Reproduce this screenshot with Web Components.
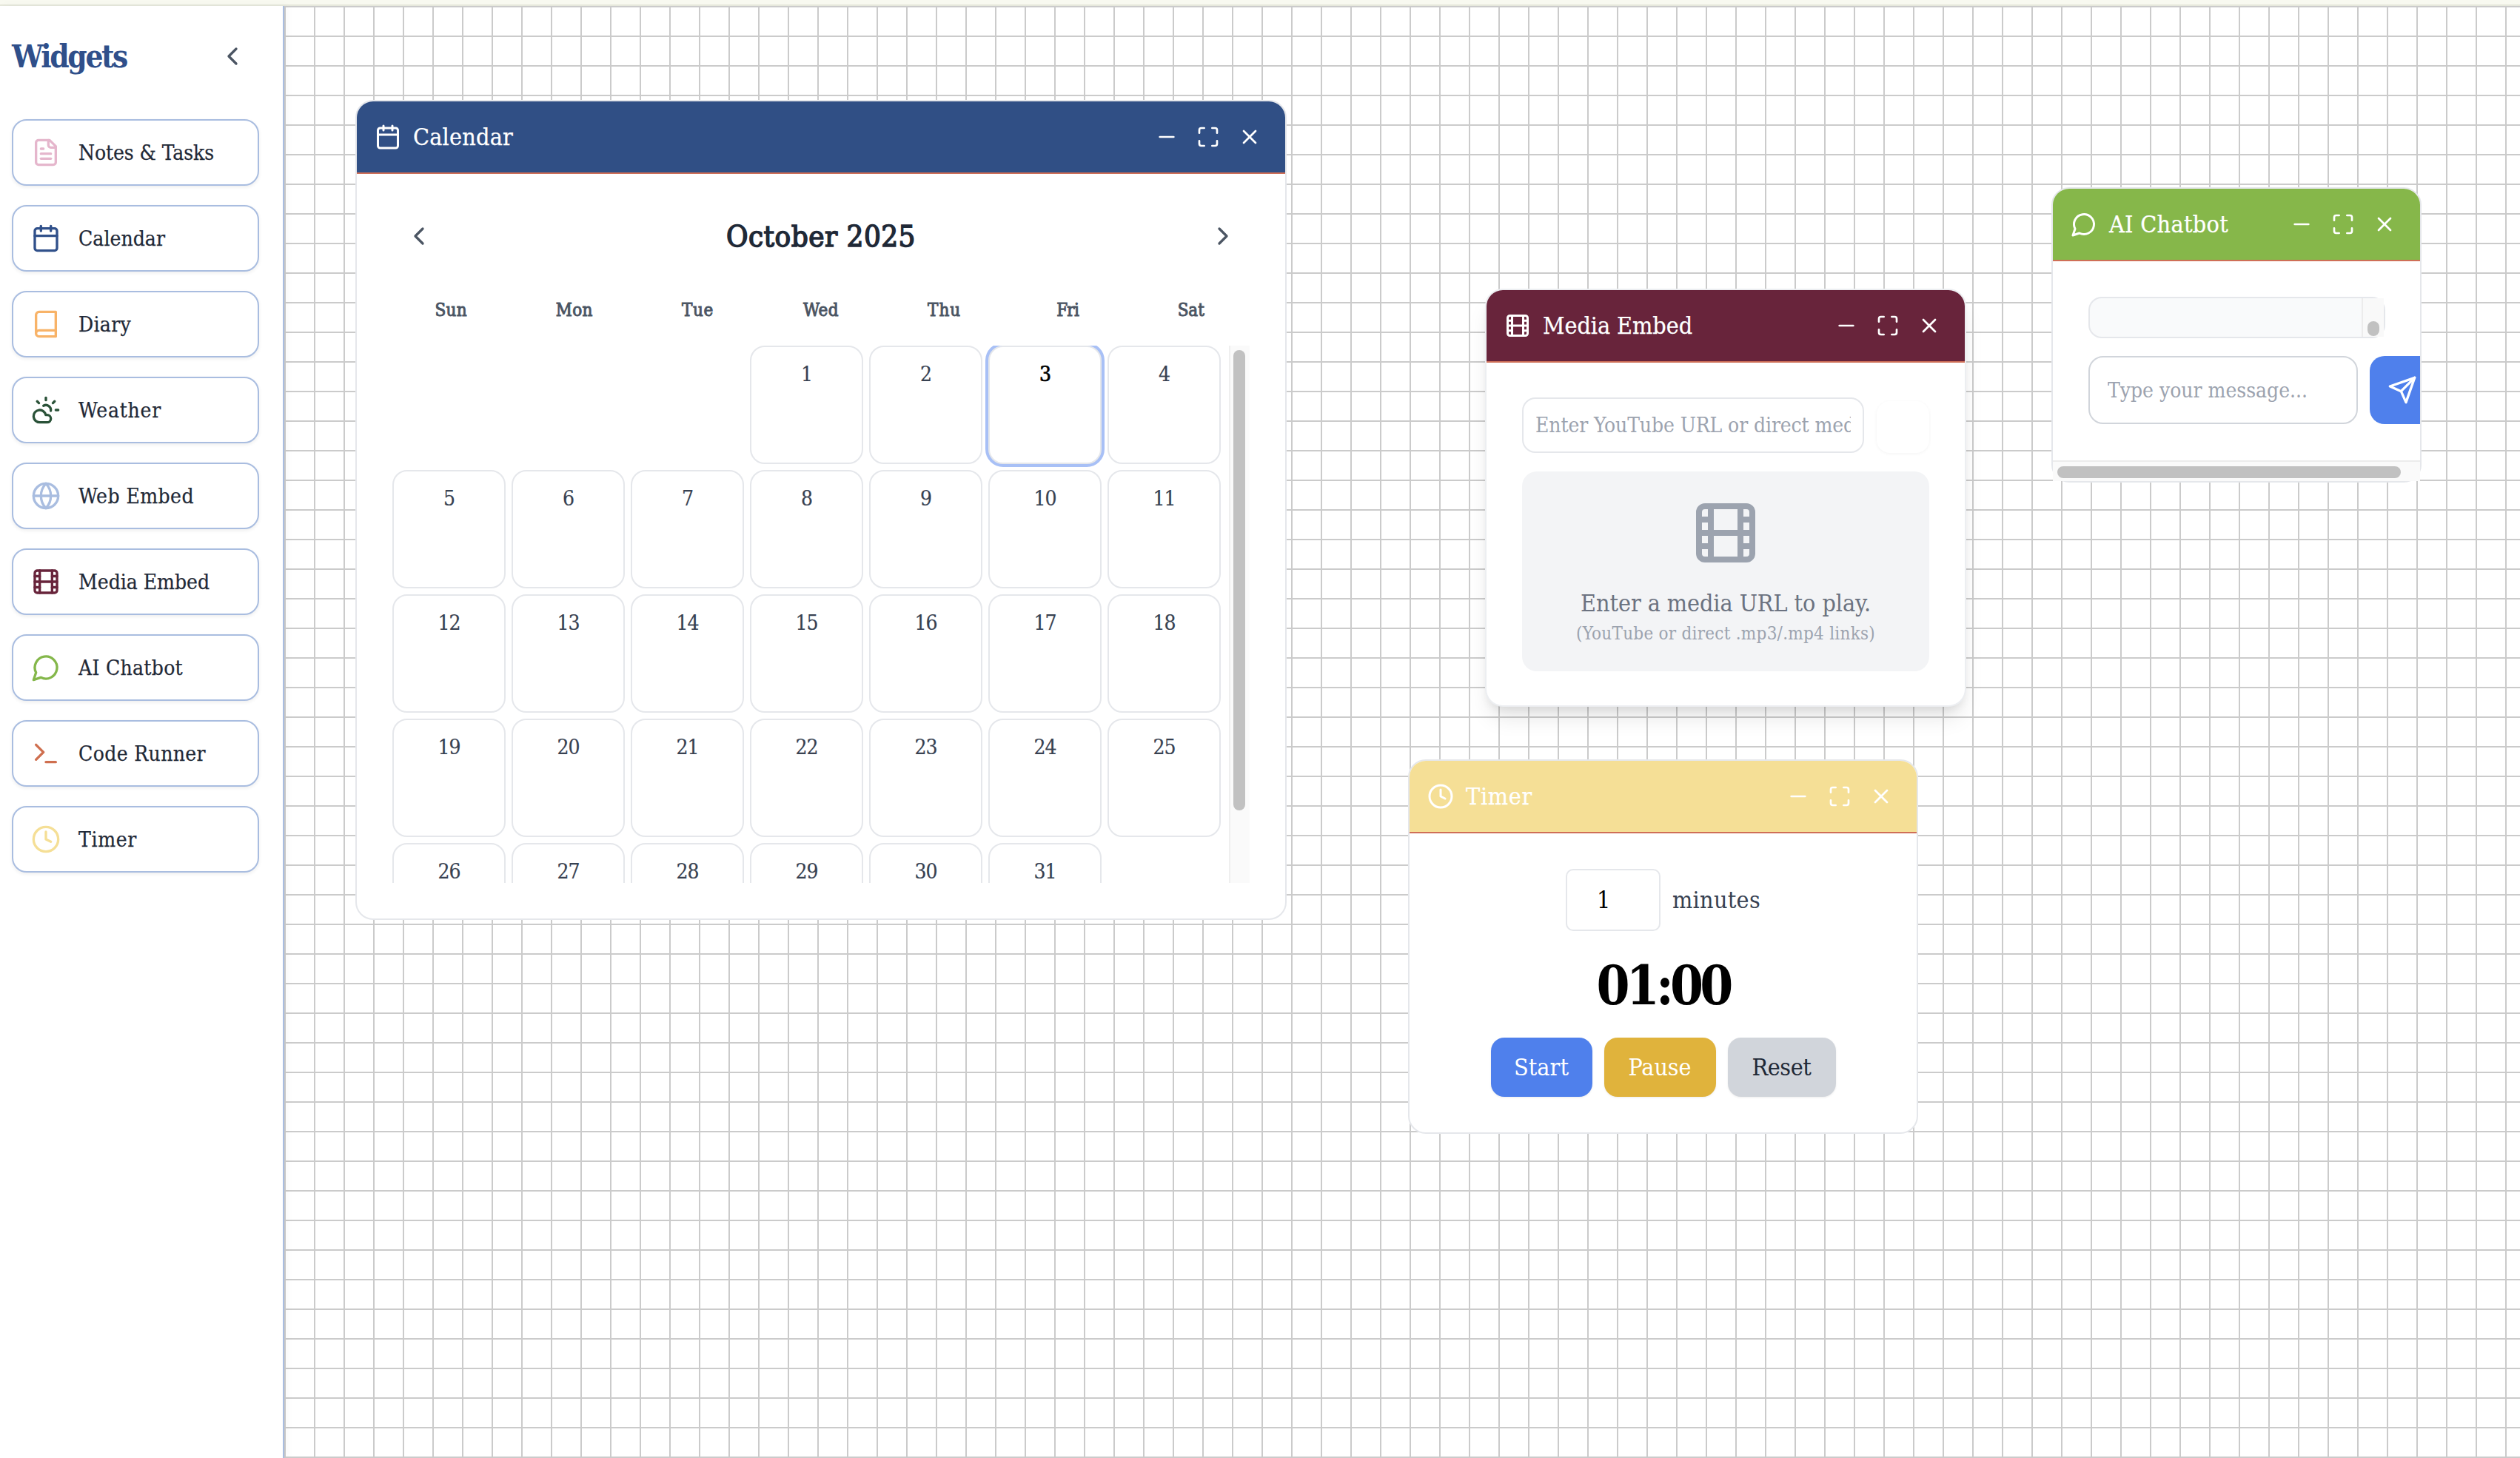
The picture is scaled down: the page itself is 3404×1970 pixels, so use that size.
<!doctype html>
<html lang="en"><head><meta charset="utf-8"><title>Widgets</title>
<style>
html,body{margin:0;height:100%;overflow:hidden;background:#fff;font-family:"DejaVu Serif Condensed","Liberation Serif",serif;color:#1f2937}
</style></head><body>
<app-shell>
  <side-bar slot="side">
    <side-item icon="file" color="#e5b6cc"><x-t w="183">Notes &amp; Tasks</x-t></side-item>
    <side-item icon="calendar" color="#30508a"><x-t w="117">Calendar</x-t></side-item>
    <side-item icon="book" color="#f8b368"><x-t w="71">Diary</x-t></side-item>
    <side-item icon="cloud" color="#2a5238"><x-t w="112">Weather</x-t></side-item>
    <side-item icon="globe" color="#a9bde0"><x-t w="156">Web Embed</x-t></side-item>
    <side-item icon="film" color="#68243b"><x-t w="177">Media Embed</x-t></side-item>
    <side-item icon="chat" color="#84b74a"><x-t w="141">AI Chatbot</x-t></side-item>
    <side-item icon="term" color="#cf6f4f"><x-t w="172">Code Runner</x-t></side-item>
    <side-item icon="clock" color="#f5df96"><x-t w="79">Timer</x-t></side-item>
  </side-bar>
  <grid-canvas slot="canvas">
    <app-window x="96" y="127" w="1258" h="1108" color="#304f85" icon="calendar" label="Calendar" fit="135"><calendar-widget></calendar-widget></app-window>
    <app-window x="1622" y="382" w="650" h="565" color="#68243b" icon="film" label="Media Embed" fit="202" raised><media-widget></media-widget></app-window>
    <app-window x="2387" y="245" w="500" h="399" color="#86b74a" icon="chat" label="AI Chatbot" fit="161"><chat-widget></chat-widget></app-window>
    <app-window x="1518" y="1018" w="689" h="506" color="#f5df96" icon="clock" label="Timer" fit="90"><timer-widget></timer-widget></app-window>
  </grid-canvas>
</app-shell>
<script>
const FAM='"DejaVu Serif Condensed","Liberation Serif",serif';
const ICONS={
 file:'<path d="M15 2H6a2 2 0 0 0-2 2v16a2 2 0 0 0 2 2h12a2 2 0 0 0 2-2V7Z"/><path d="M14 2v4a2 2 0 0 0 2 2h4"/><path d="M10 9H8"/><path d="M16 13H8"/><path d="M16 17H8"/>',
 calendar:'<path d="M8 2v4"/><path d="M16 2v4"/><rect x="3" y="4" width="18" height="18" rx="2"/><path d="M3 10h18"/>',
 book:'<path d="M4 19.5v-15A2.5 2.5 0 0 1 6.5 2H20v20H6.5a2.5 2.5 0 0 1 0-5H20"/>',
 cloud:'<path d="M12 2v2"/><path d="m4.93 4.93 1.41 1.41"/><path d="M20 12h2"/><path d="m19.07 4.93-1.41 1.41"/><path d="M15.947 12.65a4 4 0 0 0-5.925-4.128"/><path d="M13 22H7a5 5 0 1 1 4.9-6H13a3 3 0 0 1 0 6Z"/>',
 globe:'<circle cx="12" cy="12" r="10"/><path d="M12 2a14.5 14.5 0 0 0 0 20 14.5 14.5 0 0 0 0-20"/><path d="M2 12h20"/>',
 film:'<rect x="3" y="3" width="18" height="18" rx="2"/><path d="M7 3v18"/><path d="M3 7.5h4"/><path d="M3 12h18"/><path d="M3 16.5h4"/><path d="M17 3v18"/><path d="M17 7.5h4"/><path d="M17 16.5h4"/>',
 chat:'<path d="M7.9 20A9 9 0 1 0 4 16.1L2 22Z"/>',
 term:'<polyline points="4 17 10 11 4 5"/><line x1="12" x2="20" y1="19" y2="19"/>',
 clock:'<circle cx="12" cy="12" r="10"/><polyline points="12 6 12 12 16 14"/>',
 send:'<path d="m22 2-7 20-4-9-9-4Z"/><path d="M22 2 11 13"/>',
 left:'<path d="m15 18-6-6 6-6"/>',
 right:'<path d="m9 18 6-6-6-6"/>',
 minus:'<path d="M5 12h14"/>',
 max:'<path d="M8 3H5a2 2 0 0 0-2 2v3"/><path d="M21 8V5a2 2 0 0 0-2-2h-3"/><path d="M3 16v3a2 2 0 0 0 2 2h3"/><path d="M16 21h3a2 2 0 0 0 2-2v-3"/>',
 x:'<path d="M18 6 6 18"/><path d="m6 6 12 12"/>'
};
const measureCtx=document.createElement('canvas').getContext('2d');
function fitSpacing(text,font,w){measureCtx.font=font;return (w-measureCtx.measureText(text).width)/text.length;}

class LIcon extends HTMLElement{
  connectedCallback(){
    if(this.shadowRoot)return;
    const s=this.getAttribute('size')||40,c=this.getAttribute('color')||'currentColor';
    this.attachShadow({mode:'open'}).innerHTML=`<style>:host{display:block;flex:none;width:${s}px;height:${s}px;line-height:0}</style>
    <svg xmlns="http://www.w3.org/2000/svg" width="${s}" height="${s}" viewBox="0 0 24 24" fill="none" stroke="${c}" stroke-width="2" stroke-linecap="round" stroke-linejoin="round">${ICONS[this.getAttribute('name')]}</svg>`;
  }
}
class AppShell extends HTMLElement{
  constructor(){super();this.attachShadow({mode:'open'}).innerHTML=`<style>
  :host{display:flex;flex-direction:column;height:100vh}
  .strip{height:6px;background:#f8f9f0;border-bottom:2px solid #e6e8dc;flex:none}
  .main{flex:1;display:flex;min-height:0}
  </style><div class="strip"></div><div class="main"><slot name="side"></slot><slot name="canvas"></slot></div>`;}
}
class SideBar extends HTMLElement{
  constructor(){super();this.attachShadow({mode:'open'}).innerHTML=`<style>
  :host{display:block;box-sizing:border-box;width:384px;flex:none;background:#fff;border-right:2px solid #a9bde0;padding:32px 32px 0 16px;position:relative;z-index:2;box-shadow:4px 0 10px rgba(0,0,0,.035)}
  .head{display:flex;align-items:center;justify-content:space-between;height:72px;margin-bottom:49px}
  h2{margin:2px 0 0;font-size:42px;font-weight:700;color:#2f4f8a;line-height:50px}
  .list{display:flex;flex-direction:column;gap:26px}
  button{all:unset;display:block;padding:16px;color:#4b5563;width:40px;height:40px}
  </style><div class="head"><h2><x-t w="155">Widgets</x-t></h2><button><l-icon name="left" size="40"></l-icon></button></div><div class="list"><slot></slot></div>`;}
}
class SideItem extends HTMLElement{
  constructor(){super();this.attachShadow({mode:'open'});}
  connectedCallback(){
    if(this.shadowRoot.firstChild)return;
    this.shadowRoot.innerHTML=`<style>
    :host{display:flex;box-sizing:border-box;height:90px;width:334px;align-items:center;gap:24px;padding:0 24px;border:2px solid #a9bde0;border-radius:20px;background:#fff;box-shadow:0 2px 5px rgba(0,0,0,.07);font-size:28px;color:#1f2937;-webkit-text-stroke:.25px #1f2937}
    </style><l-icon name="${this.getAttribute('icon')}" color="${this.getAttribute('color')}" size="40"></l-icon><slot></slot>`;
  }
}
class GridCanvas extends HTMLElement{
  constructor(){super();this.attachShadow({mode:'open'}).innerHTML=`<style>
  :host{display:block;position:relative;flex:1;min-width:0;overflow:hidden;background-color:#fff;
    background-image:linear-gradient(#cbcbcb 2px,transparent 2px),linear-gradient(90deg,#cbcbcb 2px,transparent 2px);background-size:40px 40px}
  </style><slot></slot>`;}
}
class AppWindow extends HTMLElement{
  constructor(){super();this.attachShadow({mode:'open'});}
  connectedCallback(){
    if(this.shadowRoot.firstChild)return;
    const a=n=>this.getAttribute(n);
    this.shadowRoot.innerHTML=`<style>
    :host{position:absolute;left:${a('x')}px;top:${a('y')}px;width:${a('w')}px;height:${a('h')}px;box-sizing:border-box;display:flex;flex-direction:column;background:#fff;border:2px solid #e5e7eb;border-radius:24px}
    :host([raised]){border-color:#eceef1;box-shadow:0 20px 30px -6px rgba(0,0,0,.1),0 8px 12px -4px rgba(0,0,0,.08)}
    header{flex:none;box-sizing:border-box;height:98px;display:flex;align-items:center;padding:0 24px;background:${a('color')};border-bottom:2px solid #cf6f57;border-radius:22px 22px 0 0;color:#fff}
    .title{flex:1;display:flex;align-items:center;gap:16px;font-size:32px;min-width:0;-webkit-text-stroke:.25px #fff}
    .ctl{display:flex;gap:8px}
    .ctl span{display:block;padding:8px}
    .body{flex:1;min-height:0;display:flex;flex-direction:column}
    ::slotted(*){flex:1;min-height:0}
    </style><header><div class="title"><l-icon name="${a('icon')}" size="36"></l-icon><x-t w="${a('fit')}">${a('label')}</x-t></div>
    <div class="ctl"><span><l-icon name="minus" size="32"></l-icon></span><span><l-icon name="max" size="32"></l-icon></span><span><l-icon name="x" size="32"></l-icon></span></div></header><div class="body"><slot></slot></div>`;
  }
}
class CalendarWidget extends HTMLElement{
  constructor(){super();
    const wk=[['Sun',43.5],['Mon',50],['Tue',43],['Wed',48],['Thu',45],['Fri',30],['Sat',36]];
    let cells='<div></div><div></div><div></div>';
    for(let d=1;d<=31;d++)cells+=`<div class="day${d===3?' today':''}">${d}</div>`;
    this.attachShadow({mode:'open'}).innerHTML=`<style>
    :host{display:flex;flex-direction:column;box-sizing:border-box;padding:48px}
    .nav{flex:none;display:flex;align-items:center;justify-content:space-between;height:72px;margin-bottom:48px}
    .nav span{display:block;padding:16px;color:#4b5563}
    h3{margin:0;font-size:40px;font-weight:400;-webkit-text-stroke:1.5px #1f2937;color:#1f2937;line-height:48px}
    .wk{flex:none;display:grid;grid-template-columns:repeat(7,1fr);gap:8px;height:32px;margin-bottom:32px;text-align:center;font-size:24px;font-weight:400;-webkit-text-stroke:.95px #4b5563;color:#4b5563;line-height:32px}
    .scroll{flex:1;min-height:0;display:flex}
    .clip{flex:1;min-width:0;overflow:hidden;padding-right:11px}
    .grid{display:grid;grid-template-columns:repeat(7,1fr);grid-auto-rows:160px;gap:8px}
    .day{box-sizing:border-box;border:2px solid #e5e7eb;border-radius:20px;padding-top:23px;text-align:center;font-size:28px;line-height:28px;letter-spacing:-1px;color:#374151;-webkit-text-stroke:.2px #374151;background:#fff}
    .today{box-shadow:0 0 0 4px #a8c0f6;color:#000;-webkit-text-stroke:.7px #000}
    .track{flex:none;box-sizing:border-box;width:28px;background:#fafafa;border-left:2px solid #efefef;padding:6px 6px 0 4px}
    .thumb{height:622px;border-radius:8px;background:#c1c1c1}
    </style>
    <div class="nav"><span><l-icon name="left" size="40"></l-icon></span><h3><x-t w="256">October 2025</x-t></h3><span><l-icon name="right" size="40"></l-icon></span></div>
    <div class="wk">${wk.map(([t,w])=>`<div><x-t w="${w}">${t}</x-t></div>`).join('')}</div>
    <div class="scroll"><div class="clip"><div class="grid">${cells}</div></div><div class="track"><div class="thumb"></div></div></div>`;
  }
}
class MediaWidget extends HTMLElement{
  constructor(){super();
    const ls=fitSpacing('Enter YouTube URL or direct me','28px '+FAM,416);
    this.attachShadow({mode:'open'}).innerHTML=`<style>
    :host{display:block;box-sizing:border-box;padding:47px 48px 48px}
    .row{display:flex;gap:17px;align-items:flex-end;height:75px}
    input{box-sizing:border-box;width:462px;height:75px;border:2px solid #e5e7eb;border-radius:18px;padding:0 16px;font:28px ${FAM};letter-spacing:${ls}px;background:#fff;outline:none;color:#1f2937}
    input::placeholder{color:#9ca3af;opacity:1}
    button{all:unset;display:block;width:71px;height:70px;border-radius:18px;background:#fff;box-shadow:0 1px 4px rgba(0,0,0,.05)}
    .ph{margin-top:25px;height:270px;box-sizing:border-box;padding-top:35px;border-radius:20px;background:#f3f4f6;display:flex;flex-direction:column;align-items:center;text-align:center}
    .a{margin-top:25px;font-size:32px;line-height:44px;color:#6b7280}
    .b{margin-top:3px;font-size:24px;line-height:32px;color:#9ca3af}
    </style>
    <div class="row"><input placeholder="Enter YouTube URL or direct media link"><button aria-label="Load"></button></div>
    <div class="ph"><l-icon name="film" size="96" color="#9ca3af"></l-icon><div class="a"><x-t w="392">Enter a media URL to play.</x-t></div><div class="b"><x-t w="404">(YouTube or direct .mp3/.mp4 links)</x-t></div></div>`;
  }
}
class ChatWidget extends HTMLElement{
  constructor(){super();
    const ls=fitSpacing('Type your message...','28px '+FAM,270);
    this.attachShadow({mode:'open'}).innerHTML=`<style>
    :host{display:flex;flex-direction:column;min-height:0}
    .clip{flex:1;min-height:0;overflow:hidden;padding:48px 0 0 48px}
    .msgs{box-sizing:border-box;width:401px;height:56px;background:#f9fafb;border:2px solid #e5e7eb;border-radius:18px;display:flex;justify-content:flex-end}
    .vtrack{box-sizing:border-box;width:30px;height:100%;background:#f9f9f9;border-left:2px solid #ececec;display:flex;align-items:flex-end;justify-content:center;padding-bottom:1px}
    .vthumb{width:16px;height:20px;border-radius:8px;background:#c1c1c1}
    .row{display:flex;gap:16px;margin-top:24px;width:468px}
    input{box-sizing:border-box;width:364px;height:92px;flex:none;border:2px solid #d1d5db;border-radius:20px;padding:0 24px;font:28px ${FAM};letter-spacing:${ls}px;background:#fff;outline:none}
    input::placeholder{color:#9ca3af;opacity:1}
    button{all:unset;flex:none;box-sizing:border-box;width:88px;height:92px;padding:26px 24px;border-radius:20px;background:#4f80ec;color:#fff}
    .htrack{flex:none;box-sizing:border-box;height:28px;background:#fafafa;border-top:2px solid #ececec;padding:6px 6px 0}
    .hthumb{width:464px;height:16px;border-radius:8px;background:#c1c1c1}
    </style><div class="clip"><div class="msgs"><div class="vtrack"><div class="vthumb"></div></div></div>
    <div class="row"><input placeholder="Type your message..."><button aria-label="Send"><l-icon name="send" size="40"></l-icon></button></div></div>
    <div class="htrack"><div class="hthumb"></div></div>`;
  }
}
class TimerWidget extends HTMLElement{
  constructor(){super();
    this.attachShadow({mode:'open'}).innerHTML=`<style>
    :host{display:flex;flex-direction:column;align-items:center;box-sizing:border-box;padding:48px 0}
    .row{display:flex;align-items:center;gap:16px;height:84px;font-size:32px;color:#374151}
    input{box-sizing:border-box;width:128px;height:84px;border:2px solid #e5e7eb;border-radius:10px;padding:0 0 0 40px;font:32px ${FAM};color:#000;background:#fff;outline:none;-moz-appearance:textfield}
    input::-webkit-outer-spin-button,input::-webkit-inner-spin-button{-webkit-appearance:none;margin:0}
    .time{margin-top:24px;height:100px;line-height:100px;font-size:72px;font-weight:700;color:#000}
    .btns{display:flex;gap:16px;margin-top:20px;font-size:32px}
    .btn{box-sizing:border-box;height:80px;display:flex;align-items:center;justify-content:center;border-radius:18px;box-shadow:0 1px 3px rgba(0,0,0,.08)}
    </style><div class="row"><input type="number" value="1"><x-t w="119">minutes</x-t></div>
    <div class="time"><x-t w="180">01:00</x-t></div>
    <div class="btns"><div class="btn" style="width:137px;background:#4f80ec;color:#fff"><x-t w="74">Start</x-t></div><div class="btn" style="width:151px;background:#e0b33c;color:#fff"><x-t w="85">Pause</x-t></div><div class="btn" style="width:146px;background:#d1d5db;color:#1f2937"><x-t w="80">Reset</x-t></div></div>`;
  }
}
class XT extends HTMLElement{
  constructor(){super();this.attachShadow({mode:'open'}).innerHTML='<style>:host{display:inline-block;white-space:nowrap}</style><slot></slot>';}
  connectedCallback(){
    const cs=getComputedStyle(this),t=this.textContent;
    const sp=fitSpacing(t,`${cs.fontWeight} ${cs.fontSize} ${FAM}`,+this.getAttribute('w'));
    this.style.letterSpacing=sp.toFixed(3)+'px';
  }
}
customElements.define('l-icon',LIcon);
customElements.define('app-shell',AppShell);
customElements.define('side-bar',SideBar);
customElements.define('side-item',SideItem);
customElements.define('grid-canvas',GridCanvas);
customElements.define('app-window',AppWindow);
customElements.define('calendar-widget',CalendarWidget);
customElements.define('media-widget',MediaWidget);
customElements.define('chat-widget',ChatWidget);
customElements.define('timer-widget',TimerWidget);
customElements.define('x-t',XT);
</script>
</body></html>
